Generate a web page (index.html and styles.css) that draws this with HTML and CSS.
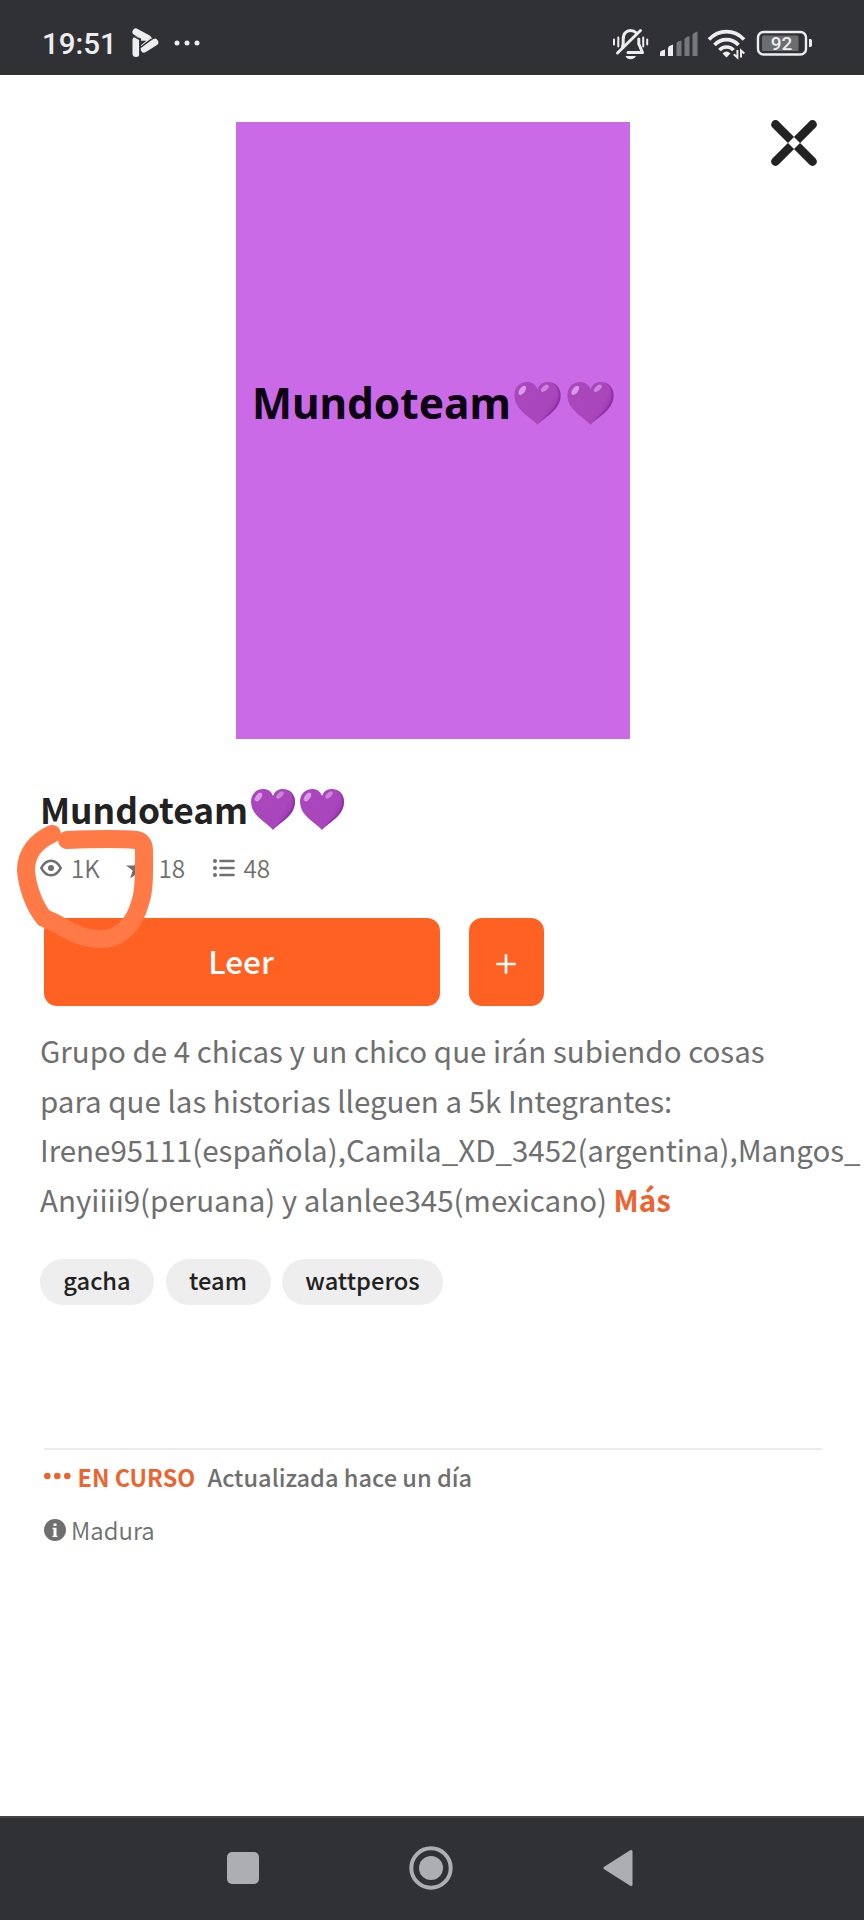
FILE: index.html
```html
<!DOCTYPE html>
<html lang="es">
<head>
<meta charset="utf-8">
<title>Mundoteam</title>
<link rel="stylesheet" href="styles.css">
</head>
<body>
<svg class="defs" width="0" height="0">
  <defs>
    <linearGradient id="heartFill" x1="0" y1="0" x2="1" y2="0.5">
      <stop offset="0" stop-color="#aa47bc"/><stop offset="0.8" stop-color="#aa46bc"/><stop offset="1" stop-color="#9c3ab0"/>
    </linearGradient>
    <symbol id="heart" viewBox="0 0 44 41">
      <path d="M22 41C15 33 0 27 0 12.500C0 5 5.500 0 12 0C17 0 20.500 2.500 22 7C23.500 2.500 27 0 32 0C38.500 0 44 5 44 12.500C44 27 29 33 22 41Z" fill="url(#heartFill)"/>
      <path d="M35 .4C39 2 42 6 42 12C42 24 31 30 22 40.500C31 32 44 27 44 12.500C44 6 40 1.500 35 .4Z" fill="#85289c" opacity=".6"/>
      <ellipse cx="7.500" cy="8" rx="2.700" ry="5" transform="rotate(35 7.500 8)" fill="#d69be2"/>
      <ellipse cx="29" cy="6" rx="2.300" ry="4.500" transform="rotate(48 29 6)" fill="#ca85d8"/>
    </symbol>
  </defs>
</svg>
<div class="screen">
  <header class="status">
    <span class="clock">19:51</span>
    <svg class="play" width="27" height="30" viewBox="0 0 27 30">
      <g stroke="#ededf0" stroke-width="7" stroke-linecap="round" fill="none">
        <path d="M4 4L16 10.500"/><path d="M4 12V25.500"/><path d="M12 21L22.800 14.300"/>
      </g>
      <path d="M9 10.500V19L20 10Z" fill="#ededf0"/>
      <path d="M0 7.500L7.900 11.500V29M8.500 19.500L19.500 11.200" stroke="#303135" stroke-width="1.500" fill="none"/>
      <path d="M8.600 12.800H14.500L8.600 17.500Z" fill="#303135"/>
    </svg>
    <svg class="dots" width="26" height="6" viewBox="0 0 26 6" fill="#ededf0"><circle cx="3" cy="3" r="2.500"/><circle cx="13" cy="3" r="2.500"/><circle cx="23" cy="3" r="2.500"/></svg>
    <svg class="tray" width="202" height="34" viewBox="612 26 202 34">
      <g fill="none" stroke="#ededf0" stroke-linecap="round" stroke-linejoin="round">
        <path d="M622.500 46.500L623.200 44V39.500C623 33.500 626.500 30.500 630.500 30.500Q634 30.500 636.500 33" stroke-width="3"/>
        <path d="M638.800 39V44L642.500 52.500H628" stroke-width="3"/>
        <path d="M617.500 53L640.500 30.500" stroke-width="3"/>
        <path d="M614 39.500V44.500M618.300 37.500V46.500M643.200 37.500V46.500M647.200 39.500V44.500" stroke-width="2"/>
      </g>
      <path d="M625.500 56H636Q634 59.300 630.500 59.300T625.500 56Z" fill="#ededf0"/>
      <g fill="#ededf0"><path d="M660 56V53Q660 51 662 50.500L665 49.500V56Z"/><path d="M668 56V48.500Q668 46.500 670 45.800L673 44.500V56Z"/></g>
      <g fill="#77787b"><path d="M676.500 56V43.500Q676.500 41.500 681.500 40.500V56Z"/><path d="M684.500 56V39.500Q684.500 37.500 689.500 36V56Z"/><path d="M692.500 56V35.500Q692.500 33 697.500 31.500V56Z"/></g>
      <g fill="none" stroke="#ededf0" stroke-width="3.700">
        <path d="M709 39.500Q716.500 31.700 726.500 31.700T744 39.500"/><path d="M714.500 45Q719.500 39.700 726.500 39.700T738.500 45"/><path d="M719.500 50.200Q722 47 726.500 47T733.500 50.200"/>
      </g>
      <path d="M722.500 53.500Q726.500 49.500 730.500 53.500L726.500 57.500Z" fill="#ededf0"/>
      <path d="M737.400 50V57.500L733.800 54.200M741 57.500V50.500L744.300 53.500" stroke="#ededf0" stroke-width="2" fill="none"/>
      <rect x="758" y="32" width="48" height="22.500" rx="5.500" fill="none" stroke="#ededf0" stroke-width="2.400"/>
      <rect x="762" y="35.500" width="36.500" height="15.500" rx="1.500" fill="#6c6d70"/>
      <path d="M809 39H810.500Q812 39 812 41V45Q812 47 810.500 47H809Z" fill="#ededf0"/>
      <text x="781.500" y="50.200" class="battery" text-anchor="middle">92</text>
    </svg>
  </header>

  <main class="sheet">
    <div class="cover">
      <span class="cover-title">Mundoteam</span>
      <svg class="cover-heart" width="47" height="43"><use href="#heart"/></svg>
      <svg class="cover-heart" width="47" height="43"><use href="#heart"/></svg>
    </div>
    <svg class="close" width="48" height="48" viewBox="0 0 48 48">
      <path d="M5.500 5.500L42.500 42.500M42.500 5.500L5.500 42.500" stroke="#222" stroke-width="8.800" stroke-linecap="round"/>
      <path d="M24 18L30 24L24 30L18 24Z" fill="#fff"/>
    </svg>

    <h1 class="title"><span class="title-text">Mundoteam</span><svg width="44" height="41"><use href="#heart"/></svg><svg width="44" height="41"><use href="#heart"/></svg></h1>

    <div class="stats">
      <svg class="eye" width="22" height="18" viewBox="0 0 22 18"><path d="M1.300 9Q5 1.700 11 1.700T20.700 9Q17 16.300 11 16.300T1.300 9Z" fill="none" stroke="#6f6f6f" stroke-width="2.600"/><circle cx="11" cy="9" r="3" fill="#6f6f6f"/></svg>
      <span class="reads">1K</span>
      <svg class="star" width="22" height="21" viewBox="0 0 22 21"><path d="M11 0L13.700 7.500H22L15.400 12.500L17.800 20.500L11 15.700L4.200 20.500L6.600 12.500L0 7.500H8.300Z" fill="#6f6f6f"/></svg>
      <span class="votes">18</span>
      <svg class="list" width="22" height="18" viewBox="0 0 22 18"><g fill="#6f6f6f"><circle cx="2" cy="2" r="2"/><circle cx="2" cy="9" r="2"/><circle cx="2" cy="16" r="2"/></g><path d="M7.500 2H20.500M7.500 9H20.500M7.500 16H20.500" stroke="#6f6f6f" stroke-width="2.600" stroke-linecap="round"/></svg>
      <span class="parts">48</span>
    </div>

    <div class="actions">
      <button class="read"><span>Leer</span></button>
      <button class="add" aria-label="Añadir"><svg width="20" height="20" viewBox="0 0 20 20"><path d="M10 1.300V18.700M1.300 10H18.700" stroke="#fff" stroke-width="2.700" stroke-linecap="round"/></svg></button>
    </div>

    <p class="about">
      <span>Grupo de 4 chicas y un chico que irán subiendo cosas</span>
      <span>para que las historias lleguen a 5k Integrantes:</span>
      <span>Irene95111(española),Camila_XD_3452(argentina),Mangos_</span>
      <span>Anyiiii9(peruana) y alanlee345(mexicano) <b>Más</b></span>
    </p>

    <div class="tags"><span class="tag t1">gacha</span><span class="tag t2">team</span><span class="tag t3">wattperos</span></div>

    <div class="meta">
      <div class="progress">
        <svg width="28" height="8" viewBox="0 0 28 8" fill="#ea6532"><circle cx="3.300" cy="4" r="3.300"/><circle cx="13.300" cy="4" r="3.300"/><circle cx="23.300" cy="4" r="3.300"/></svg>
        <span class="state">EN CURSO</span><span class="updated">Actualizada hace un día</span>
      </div>
      <div class="rating">
        <svg width="22" height="22" viewBox="0 0 22 22"><circle cx="11" cy="11" r="11" fill="#6f6f6f"/><path d="M9.500 4.500H12.500V7H9.500ZM8.500 8.700H12.500V16.800H13.500V18H8.500V16.800H9.500V9.900H8.500Z" fill="#fff"/></svg>
        <span>Madura</span>
      </div>
    </div>

    <!-- hand-drawn marker ring round the read count -->
    <svg class="marker" width="160" height="150" viewBox="0 810 160 150"><path d="M52 834C36 841 26 854 26 870C27 886 34 906 44 918C62 924 75 939 100 939C124 940 136 918 140 903C145 890 144 870 144 850Q144 841 136 840C115 838 90 839 67 840" fill="none" stroke="#ff7a47" stroke-width="18" stroke-linecap="round" stroke-linejoin="round"/></svg>
  </main>

  <nav class="navbar">
    <svg width="32" height="32" viewBox="0 0 32 32"><rect width="32" height="32" rx="5" fill="#adaeb1"/></svg>
    <svg width="44" height="44" viewBox="0 0 44 44"><circle cx="22" cy="22" r="19.700" fill="none" stroke="#adaeb1" stroke-width="4"/><circle cx="22" cy="22" r="12" fill="#adaeb1"/></svg>
    <svg width="30" height="38" viewBox="0 0 30 38"><path d="M2 19L28 2.500V35.500Z" fill="#adaeb1" stroke="#adaeb1" stroke-width="3" stroke-linejoin="round"/></svg>
  </nav>
</div>
</body>
</html>
```
FILE: styles.css
```css
* { box-sizing: border-box; }
body { margin: 0; background: #fff; font-family: "Noto Sans CJK SC", "Noto Sans", sans-serif; color: #6f6f6f; }
svg { display: block; flex: none; }
.defs { position: absolute; }
.screen { width: 864px; height: 1920px; display: flex; flex-direction: column; overflow: hidden; }

.status { height: 75px; background: #303135; display: flex; align-items: flex-start; padding-left: 42px; flex: none; }
.clock { font: 500 29.500px/34px Roboto, sans-serif; color: #ededf0; margin-top: 27px; width: 90px; }
.play { margin-top: 28px; }
.dots { margin: 40px 0 0 15px; }
.tray { margin: 26px 50px 0 auto; }
.battery { font: 500 19px Roboto, sans-serif; fill: #ededf0; }

.sheet { position: relative; flex: 1; display: flex; flex-direction: column; }
.cover { width: 394px; height: 617px; margin: 47px 0 0 236px; background: #ca6ae6; display: flex; align-items: flex-start; flex: none; padding-left: 16px; }
.cover-title { font: 700 42.400px/60px "Noto Sans", sans-serif; color: #0c0212; width: 262px; margin-top: 251px; white-space: nowrap; }
.cover-heart { margin: 260px 6px 0 0; }
.close { position: absolute; left: 770px; top: 44px; }

.title { height: 51px; margin: 41px 0 0 40px; display: flex; align-items: flex-start; gap: 5.500px; flex: none; }
.title-text { font-size: 35.300px; line-height: 50px; font-weight: 700; color: #222; width: 205px; margin-top: 4px; white-space: nowrap; }
.title svg { margin-top: 9px; }

.stats { height: 36px; margin: 19px 0 0 40px; display: flex; align-items: center; font-size: 24.300px; line-height: 34px; font-weight: 350; flex: none; }
.stats span { margin-top: 0; }
.reads { margin-left: 9px; width: 55px; }
.votes { margin-left: 10.500px; width: 54px; }
.parts { margin-left: 9px; }

.actions { display: flex; gap: 29px; margin: 31.500px 0 0 44px; flex: none; }
button { border: 0; padding: 0; margin: 0; height: 88px; background: #ff6122; border-radius: 13px; display: flex; align-items: center; justify-content: center; }
.read { width: 396px; color: #fff; font: 500 31.500px/44px "Noto Sans CJK SC", sans-serif; padding: 0 2px 3px 0; }
.add { width: 75px; padding: 4px 1px 0 0; }

.about { margin: 20.500px 0 0 40px; font-size: 29.500px; line-height: 49.500px; flex: none; }
.about span { display: block; white-space: nowrap; width: max-content; }
.about b { color: #ea6532; }

.tags { display: flex; gap: 11.500px; margin: 34.700px 0 0 40px; flex: none; }
.tag { height: 46px; border-radius: 23px; background: #eee; color: #222; font-size: 23.700px; line-height: 42px; font-weight: 500; text-align: center; }
.t1 { width: 114px; } .t2 { width: 105px; } .t3 { width: 161px; }

.meta { margin: 143px 42px 0 44px; border-top: 2px solid #ebebeb; flex: none; }
.progress { display: flex; align-items: center; height: 36px; margin-top: 9px; font-size: 23.600px; }
.progress svg { margin-top: -1px; }
.state { color: #ea6532; font-weight: 700; margin-left: 5.500px; width: 130px; white-space: nowrap; font-size: 23.400px; }
.updated { font-weight: 500; white-space: nowrap; }
.rating { display: flex; align-items: center; height: 36px; margin-top: 17.500px; font-size: 24px; font-weight: 350; gap: 5px; }
.rating span { margin-top: -2px; }

.marker { position: absolute; left: 0; top: 735px; }

.navbar { height: 104px; background: #303135; border-top: 2px solid #4a4145; display: flex; align-items: center; padding: 0 0 2px 227px; flex: none; }
.navbar svg:nth-child(2) { margin-left: 150px; }
.navbar svg:nth-child(3) { margin-left: 150px; }
```
